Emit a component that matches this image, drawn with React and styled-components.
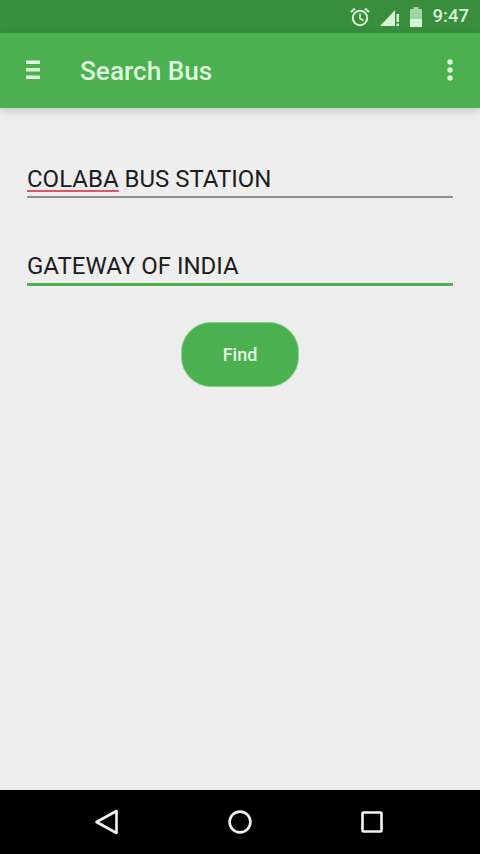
import React from 'react';
import styled, { createGlobalStyle } from 'styled-components';

const GlobalStyle = createGlobalStyle`
html, body {
  margin: 0;
  padding: 0;
  background: #eeeeee;
}
* {
  box-sizing: border-box;
}
`

const Screen = styled.div`
width: 480px;
height: 854px;
display: flex;
flex-direction: column;
overflow: hidden;
font-family: Roboto, "Liberation Sans", sans-serif;
background-color: #eeeeee;
`
const StatusBar = styled.div`
height: 33px;
flex: none;
display: flex;
align-items: center;
justify-content: flex-end;
padding-right: 11px;
background-color: #388e3c;
color: #d6f5d6;
`
const StatusIcon = styled.svg`
display: block;
margin-right: ${props => props.$gap}px;
`
const Clock = styled.span`
font-size: 18.5px;
font-weight: 500;
line-height: 33px;
`
const AppBar = styled.div`
height: 75px;
flex: none;
display: flex;
align-items: center;
position: relative;
z-index: 2;
padding: 0 27px 2px 26px;
background-color: #4caf50;
color: #dcfbdc;
box-shadow: 0 3px 8px rgba(0, 0, 0, 0.16);
`
const Title = styled.div`
flex: 1;
margin-left: 40px;
margin-top: 2px;
font-size: 26.2px;
font-weight: 500;
`
const Form = styled.div`
flex: 1;
display: flex;
flex-direction: column;
padding: 52px 27px 0;
`
const Field = styled.div`
height: 38px;
margin-bottom: 50px;
border-bottom: ${props => props.$active ? '3px solid #4caf50' : '2px solid #8e8e8e'};
font-size: 24px;
line-height: ${props => props.$active ? '36px' : '38px'};
color: #1c1c1c;
white-space: nowrap;
`
const Misspelled = styled.span`
position: relative;
&::after {
  content: "";
  position: absolute;
  left: 0;
  right: 0;
  bottom: 1px;
  height: 2px;
  background-color: #e0555f;
}
`
const FindButton = styled.button`
align-self: center;
width: 118px;
height: 65px;
margin-top: -14px;
padding-bottom: 2px;
border: 1px solid #7fd083;
border-radius: 30px;
background-color: #4caf50;
color: #e4fbe4;
font-family: inherit;
font-size: 18px;
font-weight: 500;
`
const NavBar = styled.div`
height: 64px;
flex: none;
display: flex;
align-items: center;
justify-content: space-between;
padding: 0 96px 0 94px;
background-color: #000000;
`

export default function App() {
  return (
    <Screen>
      <GlobalStyle />
      <StatusBar>
        <StatusIcon $gap={9} width="22" height="22" viewBox="0 0 22 22" fill="none" stroke="currentColor" strokeWidth="2">
          <circle cx="11" cy="12" r="7.2" />
          <path d="M11 7.5V12.5L14.5 14.5" strokeWidth="1.6" />
          <path d="M2 6L6 2.5M20 6L16 2.5" strokeWidth="2.2" />
        </StatusIcon>
        <StatusIcon $gap={9} width="20" height="20" viewBox="0 0 20 20" fill="currentColor">
          <path d="M0 19L15 3V19Z" />
          <path d="M16.5 7H19V15H16.5ZM16.5 16.5H19V19H16.5Z" />
        </StatusIcon>
        <StatusIcon $gap={10} width="14" height="22" viewBox="0 0 14 22">
          <path d="M4.5 1H9.5V3H13V21H1V3H4.5Z" fill="#a3d4a5" />
          <path d="M1 13H13V21H1Z" fill="currentColor" />
        </StatusIcon>
        <Clock>9:47</Clock>
      </StatusBar>
      <AppBar>
        <svg width="14" height="20" viewBox="0 0 14 20" fill="currentColor">
          <rect x="0" y="0.5" width="14" height="3.5" />
          <rect x="0" y="8" width="14" height="3.5" />
          <rect x="0" y="15.5" width="14" height="3.5" />
        </svg>
        <Title>Search Bus</Title>
        <svg width="6" height="22" viewBox="0 0 6 22" fill="currentColor">
          <circle cx="3" cy="3" r="2.7" />
          <circle cx="3" cy="11" r="2.7" />
          <circle cx="3" cy="19" r="2.7" />
        </svg>
      </AppBar>
      <Form>
        <Field><Misspelled>COLABA</Misspelled> BUS STATION</Field>
        <Field $active>GATEWAY OF INDIA</Field>
        <FindButton>Find</FindButton>
      </Form>
      <NavBar>
        <svg width="26" height="26" viewBox="0 0 26 26" fill="none" stroke="#f2f2f2" strokeWidth="2.6" strokeLinejoin="round">
          <path d="M22.5 2V24L2.5 13Z" />
        </svg>
        <svg width="26" height="26" viewBox="0 0 26 26" fill="none" stroke="#f2f2f2" strokeWidth="2.6">
          <circle cx="13" cy="13" r="10.4" />
        </svg>
        <svg width="24" height="24" viewBox="0 0 24 24" fill="none" stroke="#f2f2f2" strokeWidth="2.6" strokeLinejoin="round">
          <rect x="2.5" y="2.5" width="19" height="19" rx="1" />
        </svg>
      </NavBar>
    </Screen>
  );
}
